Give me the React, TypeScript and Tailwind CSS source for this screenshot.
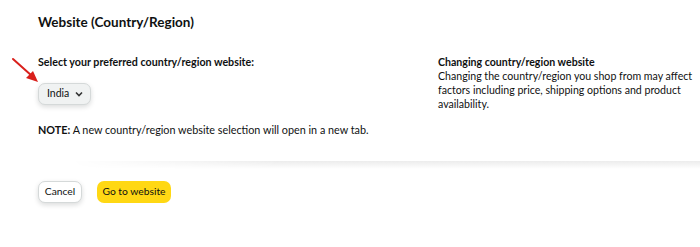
export default function App() {
  return (
    <div className="relative h-[247px] w-[700px] overflow-hidden bg-white font-['Lato',sans-serif] text-[#0f1111]">
      <svg className="absolute left-[10px] top-[57px]" width="32" height="28" viewBox="0 0 32 28">
        <line x1="3" y1="2" x2="22" y2="19" stroke="#d9201c" strokeWidth="2" strokeLinecap="round" />
        <polygon points="28,25 16,21 23,14" fill="#d9201c" />
      </svg>

      <div className="px-[38px] pt-[12px]">
        <h1 className="text-[13.5px] font-bold leading-[20px]">Website (Country/Region)</h1>

        <div className="mt-[22px] flex">
          <div className="w-[400px] shrink-0">
            <p className="text-[10.7px] font-bold leading-[16px]">Select your preferred country/region website:</p>
            <button className="mt-[13px] flex h-[22px] items-center gap-[6px] rounded-[7px] border border-[#d5d9d9] bg-[#f0f2f2] pl-[8px] pr-[7px] text-[10.5px] text-[#0f1111] shadow-[0_2px_5px_rgba(15,17,17,0.15)]">
              India
              <svg width="8" height="6" viewBox="0 0 8 6">
                <path d="M1 1.5 L4 4.5 L7 1.5" fill="none" stroke="#333" strokeWidth="1.6" />
              </svg>
            </button>
            <p className="mt-[17px] text-[10.8px] leading-[16px]">
              <span className="font-bold">NOTE:</span> A new country/region website selection will open in a new tab.
            </p>
          </div>
          <div className="mt-[1px] w-[260px] shrink-0 text-[10.6px] leading-[14px]">
            <p className="font-bold">Changing country/region website</p>
            <p>Changing the country/region you shop from may affect factors including price, shipping options and product availability.</p>
          </div>
        </div>
      </div>

      <div className="mt-[23px] h-[8px] bg-gradient-to-b from-[#ececec] to-white [mask-image:linear-gradient(to_right,transparent_10%,black_40%)]" />

      <div className="mt-[12px] flex gap-[15px] px-[38px]">
        <button className="h-[22px] w-[44px] rounded-[7px] border border-[#d5d9d9] bg-white text-[10.3px] shadow-[0_2px_5px_rgba(15,17,17,0.15)]">Cancel</button>
        <button className="h-[22px] w-[74px] rounded-[7px] bg-[#ffd814] text-[10.3px]">Go to website</button>
      </div>
    </div>
  );
}
